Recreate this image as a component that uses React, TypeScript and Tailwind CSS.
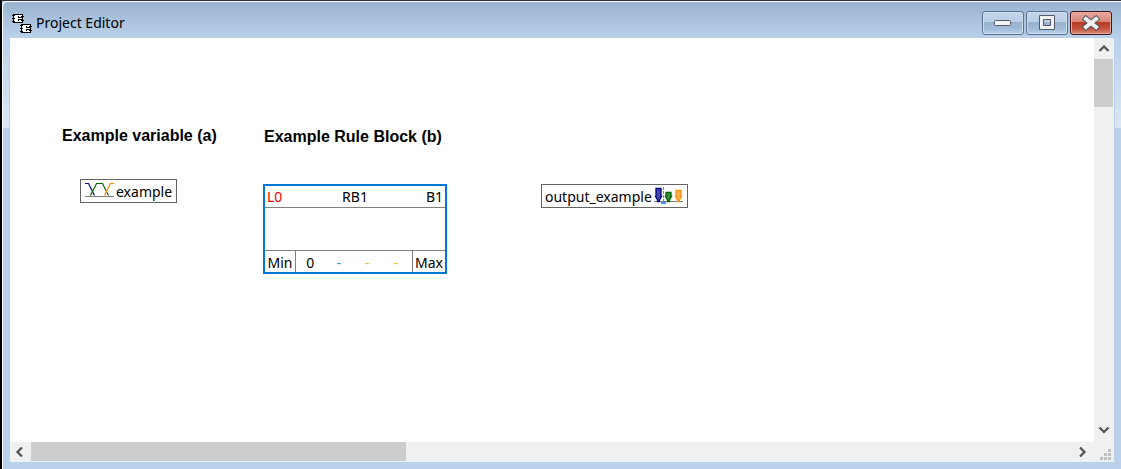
import React from "react";

const CHIP_PINS = "M0 1h3v1H0zM0 4h3v1H0zM0 7h3v1H0zM9 2h3v1H9zM9 6h3v1H9zM6 2h1v2H6zM7 3h3v1H7zM7 5h3v1H7zM6 5h1v2H6z";

function Chip() {
  return (
    <>
      <rect x="1" y="0" width="10" height="9" fill="#000" />
      <rect x="2" y="1" width="8" height="7" fill="#fff" />
      <path d={CHIP_PINS} fill="#000" />
    </>
  );
}

function AppIcon() {
  return (
    <svg width="20" height="20" viewBox="0 0 20 20" shapeRendering="crispEdges" aria-hidden="true">
      <g transform="translate(0 1)">
        <Chip />
      </g>
      <g transform="translate(8 11)">
        <Chip />
      </g>
    </svg>
  );
}

function CaptionButton({ label, close = false, children }: { label: string; close?: boolean; children: React.ReactNode }) {
  const look = close
    ? "border-[#42141c] bg-[linear-gradient(#e8aaa0,#d98273_46%,#b53b24_47%,#c4523c_75%,#d98a78)] shadow-[inset_0_0_0_1px_#e6a99d]"
    : "border-[#5d708b] bg-[linear-gradient(#c3d6ea,#b8cfe6_46%,#97b1cd_47%,#a1bbd8_75%,#b8d2ec)] shadow-[inset_0_0_0_1px_#cfdfef]";
  return (
    <button type="button" aria-label={label} className={`flex h-6 w-[42px] items-center justify-center rounded-[3px] border ${look}`}>
      {children}
    </button>
  );
}

function Chevron({ d }: { d: string }) {
  return (
    <svg width="12" height="12" viewBox="0 0 12 12" fill="none" stroke="#505050" strokeWidth="2.2" aria-hidden="true">
      <path d={d} />
    </svg>
  );
}

function VariableIcon() {
  return (
    <svg width="30" height="16" viewBox="0 0 30 16" fill="none" aria-hidden="true">
      <path d="M0 14.5h29" stroke="#808080" />
      <path d="M0 1.5h3.500L9.500 13.500" stroke="#000090" strokeWidth="1.2" />
      <path d="M5.500 13.500L11.500 1.500h6l6 12" stroke="#006400" strokeWidth="1.2" />
      <path d="M19.500 13.500L25.500 1.500H29" stroke="#ff8c00" strokeWidth="1.2" />
    </svg>
  );
}

function OutputIcon() {
  return (
    <svg width="30" height="18" viewBox="0 0 30 18" aria-hidden="true">
      <path d="M1 14.5h29" stroke="#808080" />
      <path d="M10.500 0v14" stroke="#3399ff" strokeDasharray="3 1" />
      <path d="M8 15h5v2H8z" fill="#3399ff" />
      <path d="M3 1.500h5v8h.5L6.500 13v1.500h-2V13L2.500 9.500H3z" fill="#4848a8" stroke="#000080" strokeWidth="1.300" />
      <path d="M13 5.500h5v4h.5L16.500 13v1.500h-2V13l-2-3.500h.5z" fill="#3c8c3c" stroke="#006400" strokeWidth="1.300" />
      <path d="M23 3.500h5v6h.5L26.500 13v1.500h-2V13l-2-3.500h.5z" fill="#ffb04c" stroke="#ff9010" strokeWidth="1.300" />
    </svg>
  );
}

export default function App() {
  return (
    <div className="flex h-screen flex-col border-t border-l-2 border-t-[#30303c] border-l-black bg-[#bad1eb] font-['Noto_Sans','Open_Sans',sans-serif] text-sm text-black">
      <div className="flex min-h-0 flex-1 flex-col rounded-tl-md border-t border-l border-white bg-[linear-gradient(#9ab3d0,#b9d1ea_36px,#bad1eb)]">
        <header className="flex h-9 shrink-0 items-center justify-between px-[9px]">
          <div className="flex items-center gap-1 pt-1.5">
            <AppIcon />
            <h1 className="leading-5">Project Editor</h1>
          </div>
          <div className="flex gap-0.5 pt-1.5">
            <CaptionButton label="Minimize">
              <svg width="18" height="8" viewBox="0 0 18 8" aria-hidden="true">
                <rect x=".5" y="1.500" width="16" height="5" rx="1" fill="#f3f3f3" stroke="#555866" />
              </svg>
            </CaptionButton>
            <CaptionButton label="Maximize">
              <svg width="18" height="16" viewBox="0 0 18 16" aria-hidden="true">
                <path fillRule="evenodd" d="M1.500 .5h15v14h-15zM5.500 4.500v6h7v-6z" fill="#f0f0f0" stroke="#555866" />
              </svg>
            </CaptionButton>
            <CaptionButton label="Close" close>
              <svg width="20" height="16" viewBox="0 0 20 16" fill="none" strokeLinecap="square" aria-hidden="true">
                <path d="M5 4l10 8M15 4L5 12" stroke="#555866" strokeWidth="6" />
                <path d="M5 4l10 8M15 4L5 12" stroke="#f4f4f4" strokeWidth="4" />
              </svg>
            </CaptionButton>
          </div>
        </header>

        <div className="flex min-h-0 flex-1">
          <div className="flex w-[7px] shrink-0 flex-col">
            <div className="h-[91px] border-r border-b border-[#b9d1ee] bg-[linear-gradient(#bad1eb,#dbe7f5)]" />
          </div>
          <div className="grid min-w-0 flex-1 grid-cols-[1fr_20px] grid-rows-[1fr_20px] bg-[#f0f0f0]">
            <main className="relative overflow-hidden bg-white">
              <h2 className="absolute top-[88px] left-[52px] font-['Liberation_Sans',Arial,sans-serif] text-base leading-5 font-bold whitespace-nowrap">
                Example variable (a)
              </h2>
              <h2 className="absolute top-[89px] left-[254px] font-['Liberation_Sans',Arial,sans-serif] text-base leading-5 font-bold whitespace-nowrap">
                Example Rule Block (b)
              </h2>

              <div className="absolute top-[141px] left-[70px] flex h-6 w-[97px] items-start gap-px border border-[#646464] pl-1">
                <span className="mt-0.5 shrink-0"><VariableIcon /></span>
                <span className="leading-6">example</span>
              </div>

              <section className="absolute top-[146px] left-[253px] grid h-[90px] w-[184px] grid-rows-[22px_1fr_22px] border-2 border-[#0078d7]">
                <div className="flex justify-between border-b border-[#808080] px-0.5 leading-[22px]">
                  <span className="w-10 text-[#f00000]">L0</span>
                  <span>RB1</span>
                  <span className="w-10 text-right">B1</span>
                </div>
                <div />
                <div className="flex border-t border-[#808080] leading-6">
                  <span className="w-[31px] border-r border-[#808080] text-center">Min</span>
                  <div className="grid flex-1 grid-cols-4 pr-0.5 text-center">
                    <span>0</span>
                    <span className="text-[#4090d0]">-</span>
                    <span className="text-[#f4b536]">-</span>
                    <span className="text-[#f4b536]">-</span>
                  </div>
                  <span className="w-[33px] border-l border-[#808080] text-center">Max</span>
                </div>
              </section>

              <div className="absolute top-[146px] left-[531px] flex h-6 w-[147px] items-start justify-between border border-[#646464] pl-[3px]">
                <span className="leading-6">output_example</span>
                <span className="mt-0.5 mr-1 shrink-0"><OutputIcon /></span>
              </div>
            </main>

            <div className="flex min-h-0 flex-col pr-px">
              <button type="button" aria-label="Scroll up" className="flex h-[21px] shrink-0 items-center justify-center">
                <Chevron d="M1.500 8l4.500-4.500L10.500 8" />
              </button>
              <div className="min-h-0 flex-1"><div className="h-[13.3%] bg-[#cdcdcd]" /></div>
              <button type="button" aria-label="Scroll down" className="flex h-[21px] shrink-0 items-start justify-center pt-[3px]">
                <Chevron d="M1.500 3.500L6 8l4.500-4.500" />
              </button>
            </div>

            <div className="flex pb-px">
              <button type="button" aria-label="Scroll left" className="flex w-[21px] shrink-0 items-center pl-1">
                <Chevron d="M8 1.500L3.500 6 8 10.500" />
              </button>
              <div className="flex flex-1"><div className="w-[36%] bg-[#cdcdcd]" /></div>
              <button type="button" aria-label="Scroll right" className="flex w-[21px] shrink-0 items-center pl-[3px]">
                <Chevron d="M4 1.500L8.500 6 4 10.500" />
              </button>
            </div>

            <div className="flex items-end justify-end pr-[3px] pb-0.5">
              <svg width="11" height="11" viewBox="0 0 11 11" fill="#bfbfbf" aria-hidden="true">
                <path d="M8 0h3v3H8zM4 4h3v3H4zM8 4h3v3H8zM0 8h3v3H0zM4 8h3v3H4zM8 8h3v3H8z" />
              </svg>
            </div>
          </div>
          <div className="flex w-[7px] shrink-0 flex-col">
            <div className="h-[91px] border-b border-l border-[#b9d1ee] bg-[linear-gradient(#bad1eb,#dbe7f5)]" />
          </div>
        </div>
        <div className="h-[7px] shrink-0 bg-[#bad1eb]" />
      </div>
    </div>
  );
}
